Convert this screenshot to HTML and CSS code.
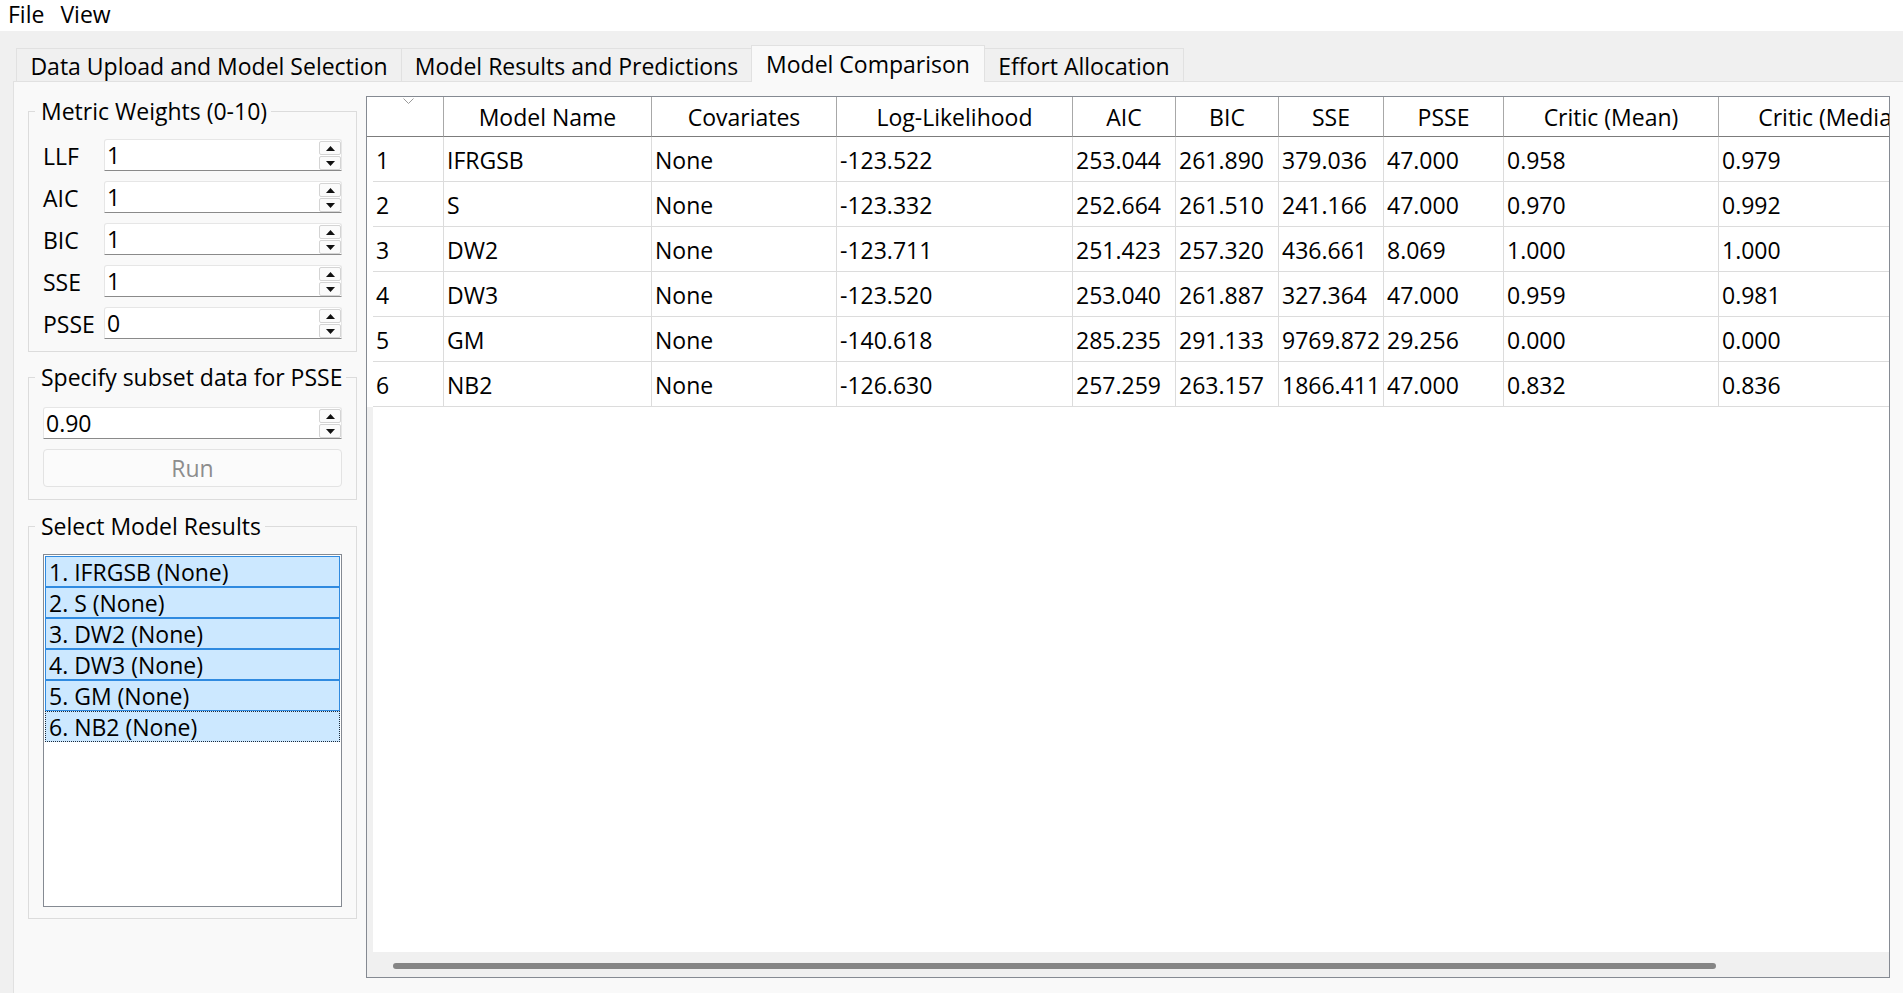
FILE: index.html
```html
<!DOCTYPE html>
<html lang="en">
<head>
<meta charset="utf-8">
<title>Model Comparison</title>
<link rel="stylesheet" href="styles.css">
</head>
<body>
<div class="menubar">
  <span class="menu-item">File</span>
  <span class="menu-item">View</span>
</div>
<div class="tabwidget">
  <div class="tabbar">
    <div class="tab tab-data">Data Upload and Model Selection</div>
    <div class="tab tab-results">Model Results and Predictions</div>
    <div class="tab tab-compare is-active">Model Comparison</div>
    <div class="tab tab-effort">Effort Allocation</div>
  </div>
  <div class="pane">
    <div class="sidebar">
      <fieldset class="group group-weights">
        <legend>Metric Weights (0-10)</legend>
        <div class="weights">
          <span class="weight-label">LLF</span>
          <div class="spin"><span class="spin-value">1</span><span class="spin-btns"><span class="spin-btn"><svg width="9" height="5" viewBox="0 0 9 5"><path d="M0 5L4.5 0L9 5Z"/></svg></span><span class="spin-btn"><svg width="9" height="5" viewBox="0 0 9 5"><path d="M0 0L4.5 5L9 0Z"/></svg></span></span></div>
          <span class="weight-label">AIC</span>
          <div class="spin"><span class="spin-value">1</span><span class="spin-btns"><span class="spin-btn"><svg width="9" height="5" viewBox="0 0 9 5"><path d="M0 5L4.5 0L9 5Z"/></svg></span><span class="spin-btn"><svg width="9" height="5" viewBox="0 0 9 5"><path d="M0 0L4.5 5L9 0Z"/></svg></span></span></div>
          <span class="weight-label">BIC</span>
          <div class="spin"><span class="spin-value">1</span><span class="spin-btns"><span class="spin-btn"><svg width="9" height="5" viewBox="0 0 9 5"><path d="M0 5L4.5 0L9 5Z"/></svg></span><span class="spin-btn"><svg width="9" height="5" viewBox="0 0 9 5"><path d="M0 0L4.5 5L9 0Z"/></svg></span></span></div>
          <span class="weight-label">SSE</span>
          <div class="spin"><span class="spin-value">1</span><span class="spin-btns"><span class="spin-btn"><svg width="9" height="5" viewBox="0 0 9 5"><path d="M0 5L4.5 0L9 5Z"/></svg></span><span class="spin-btn"><svg width="9" height="5" viewBox="0 0 9 5"><path d="M0 0L4.5 5L9 0Z"/></svg></span></span></div>
          <span class="weight-label">PSSE</span>
          <div class="spin"><span class="spin-value">0</span><span class="spin-btns"><span class="spin-btn"><svg width="9" height="5" viewBox="0 0 9 5"><path d="M0 5L4.5 0L9 5Z"/></svg></span><span class="spin-btn"><svg width="9" height="5" viewBox="0 0 9 5"><path d="M0 0L4.5 5L9 0Z"/></svg></span></span></div>
        </div>
      </fieldset>

      <fieldset class="group group-subset">
        <legend>Specify subset data for PSSE</legend>
        <div class="subset">
          <div class="spin"><span class="spin-value">0.90</span><span class="spin-btns"><span class="spin-btn"><svg width="9" height="5" viewBox="0 0 9 5"><path d="M0 5L4.5 0L9 5Z"/></svg></span><span class="spin-btn"><svg width="9" height="5" viewBox="0 0 9 5"><path d="M0 0L4.5 5L9 0Z"/></svg></span></span></div>
          <div class="btn btn-disabled">Run</div>
        </div>
      </fieldset>

      <fieldset class="group group-select">
        <legend>Select Model Results</legend>
        <div class="listbox">
          <div class="list-item">1. IFRGSB (None)</div>
          <div class="list-item">2. S (None)</div>
          <div class="list-item">3. DW2 (None)</div>
          <div class="list-item">4. DW3 (None)</div>
          <div class="list-item">5. GM (None)</div>
          <div class="list-item is-current">6. NB2 (None)</div>
        </div>
      </fieldset>
    </div>

    <div class="tableview">
      <div class="viewport">
        <div class="grid">
          <div class="hcell hcell-corner"><svg class="sort-ind" width="11" height="6" viewBox="0 0 11 6"><path d="M0.5 0.5L5.5 5.5L10.5 0.5" fill="none" stroke="#9a9a9a" stroke-width="1"/></svg></div>
          <div class="hcell">Model Name</div>
          <div class="hcell">Covariates</div>
          <div class="hcell">Log-Likelihood</div>
          <div class="hcell">AIC</div>
          <div class="hcell">BIC</div>
          <div class="hcell">SSE</div>
          <div class="hcell">PSSE</div>
          <div class="hcell">Critic (Mean)</div>
          <div class="hcell">Critic (Median)</div>

          <div class="vh"></div><div class="cell">1</div><div class="cell">IFRGSB</div><div class="cell">None</div><div class="cell">-123.522</div><div class="cell">253.044</div><div class="cell">261.890</div><div class="cell">379.036</div><div class="cell">47.000</div><div class="cell">0.958</div><div class="cell">0.979</div>
          <div class="vh"></div><div class="cell">2</div><div class="cell">S</div><div class="cell">None</div><div class="cell">-123.332</div><div class="cell">252.664</div><div class="cell">261.510</div><div class="cell">241.166</div><div class="cell">47.000</div><div class="cell">0.970</div><div class="cell">0.992</div>
          <div class="vh"></div><div class="cell">3</div><div class="cell">DW2</div><div class="cell">None</div><div class="cell">-123.711</div><div class="cell">251.423</div><div class="cell">257.320</div><div class="cell">436.661</div><div class="cell">8.069</div><div class="cell">1.000</div><div class="cell">1.000</div>
          <div class="vh"></div><div class="cell">4</div><div class="cell">DW3</div><div class="cell">None</div><div class="cell">-123.520</div><div class="cell">253.040</div><div class="cell">261.887</div><div class="cell">327.364</div><div class="cell">47.000</div><div class="cell">0.959</div><div class="cell">0.981</div>
          <div class="vh"></div><div class="cell">5</div><div class="cell">GM</div><div class="cell">None</div><div class="cell">-140.618</div><div class="cell">285.235</div><div class="cell">291.133</div><div class="cell">9769.872</div><div class="cell">29.256</div><div class="cell">0.000</div><div class="cell">0.000</div>
          <div class="vh"></div><div class="cell">6</div><div class="cell">NB2</div><div class="cell">None</div><div class="cell">-126.630</div><div class="cell">257.259</div><div class="cell">263.157</div><div class="cell">1866.411</div><div class="cell">47.000</div><div class="cell">0.832</div><div class="cell">0.836</div>
        </div>
      </div>
      <div class="hscroll"><div class="hscroll-thumb"></div></div>
    </div>
  </div>
</div>
</body>
</html>
```

FILE: styles.css
```css
* { box-sizing: border-box; }

html, body {
  margin: 0;
  padding: 0;
}

body {
  width: 1903px;
  height: 993px;
  overflow: hidden;
  background: #f0f0f0;
  font-family: "Open Sans", "Liberation Sans", sans-serif;
  font-size: 23px;
  color: #000;
}

/* ---------- menu bar ---------- */
.menubar {
  height: 31px;
  background: #ffffff;
  display: flex;
  line-height: 29px;
}
.menu-item {
  padding: 0 8px;
}

/* ---------- tabs ---------- */
.tabwidget {
  padding-left: 13px;
}
.tabbar {
  height: 50px;
  display: flex;
  align-items: flex-end;
  padding-left: 3px;
}
.tab {
  height: 33px;
  margin-right: -1px;
  border: 1px solid #e1e1e1;
  border-bottom: none;
  background: #f0f0f0;
  text-align: center;
  padding-top: 2px;
  line-height: 30px;
  white-space: nowrap;
}
.tab-data { width: 386px; }
.tab-results { width: 351px; }
.tab-compare { width: 234px; }
.tab-effort { width: 200px; }
.tab.is-active {
  height: 37px;
  margin-bottom: -1px;
  padding-top: 3px;
  background: #f9f9f9;
  position: relative;
  z-index: 1;
}

.pane {
  height: 912px;
  background: #f9f9f9;
  border-top: 1px solid #e1e1e1;
  border-left: 1px solid #e1e1e1;
  padding: 14px 13px 15px 14px;
  display: flex;
  gap: 9px;
}

/* ---------- sidebar ---------- */
.sidebar {
  width: 329px;
  flex: none;
  padding-top: 2px;
}
.group {
  margin: 0;
  min-width: 0;
  border: 1px solid #dcdcdc;
  padding: 15px 14px 12px 14px;
}
.group legend {
  padding: 0 4px 0 6px;
  margin-left: -8px;
  line-height: 26px;
  white-space: nowrap;
}
.group-subset {
  margin-top: 12px;
  padding-top: 17px;
}
.group-select {
  margin-top: 13px;
  padding-bottom: 11px;
}

.weights {
  display: grid;
  grid-template-columns: 61px 1fr;
  row-gap: 10px;
  align-items: center;
}
.weight-label {
  line-height: 30px;
  padding-top: 1px;
}

.spin {
  height: 32px;
  display: flex;
  background: #ffffff;
  border: 1px solid #e6e6e6;
  border-bottom-color: #8a8a8a;
  border-radius: 3px 3px 0 0;
}
.spin-value {
  flex: 1;
  padding-left: 2px;
  line-height: 30px;
}
.spin-btns {
  width: 22px;
  flex: none;
  display: flex;
  flex-direction: column;
  gap: 1px;
  padding-top: 1px;
}
.spin-btn {
  height: 14px;
  border: 1px solid #d4d4d4;
  border-radius: 2px;
  background: #fbfbfb;
  display: flex;
  align-items: center;
  justify-content: center;
}
.spin-btn svg {
  display: block;
  fill: #111111;
}

.subset {
  display: flex;
  flex-direction: column;
  gap: 10px;
}
.btn {
  height: 38px;
  border: 1px solid #e3e3e3;
  border-radius: 4px;
  background: #fbfbfb;
  text-align: center;
  line-height: 36px;
}
.btn-disabled {
  color: #8d8d8d;
}

.listbox {
  height: 353px;
  border: 1px solid #858a92;
  background: #ffffff;
  padding: 1px;
}
.list-item {
  height: 31px;
  border: 1px solid #2f8ae0;
  background: #cce8ff;
  padding: 1px 0 0 3px;
  line-height: 28px;
  white-space: nowrap;
}
.list-item.is-current {
  border: 1px dotted #1b2a3a;
}

/* ---------- table ---------- */
.tableview {
  flex: 1;
  min-width: 0;
  border: 1px solid #858a92;
  background: #ffffff;
  display: flex;
  flex-direction: column;
}
.viewport {
  flex: 1;
  overflow: hidden;
  background: linear-gradient(to right, #f0f0f0 6px, #ffffff 6px);
}
.grid {
  display: grid;
  grid-template-columns: 6px 71px 208px 185px 236px 103px 103px 105px 120px 215px 234px;
  grid-template-rows: 40px;
  grid-auto-rows: 45px;
  width: max-content;
  background: #ffffff;
}
.hcell {
  background: #ffffff;
  border-right: 1px solid #a8a8a8;
  border-bottom: 1px solid #7c7c7c;
  text-align: center;
  padding-top: 2px;
  line-height: 37px;
  white-space: nowrap;
  overflow: hidden;
}
.hcell-corner {
  grid-column: span 2;
  position: relative;
}
.sort-ind {
  position: absolute;
  top: 1px;
  left: 36px;
}
.vh {
  background: #ffffff;
}
.cell {
  border-right: 1px solid #dcdcdc;
  border-bottom: 1px solid #dcdcdc;
  padding: 3px 0 0 3px;
  line-height: 41px;
  white-space: nowrap;
  overflow: hidden;
}

.hscroll {
  height: 25px;
  flex: none;
  background: #f0f0f0;
  padding-top: 11px;
}
.hscroll-thumb {
  margin-left: 26px;
  width: 1323px;
  height: 6px;
  border-radius: 3px;
  background: #858585;
}
```
